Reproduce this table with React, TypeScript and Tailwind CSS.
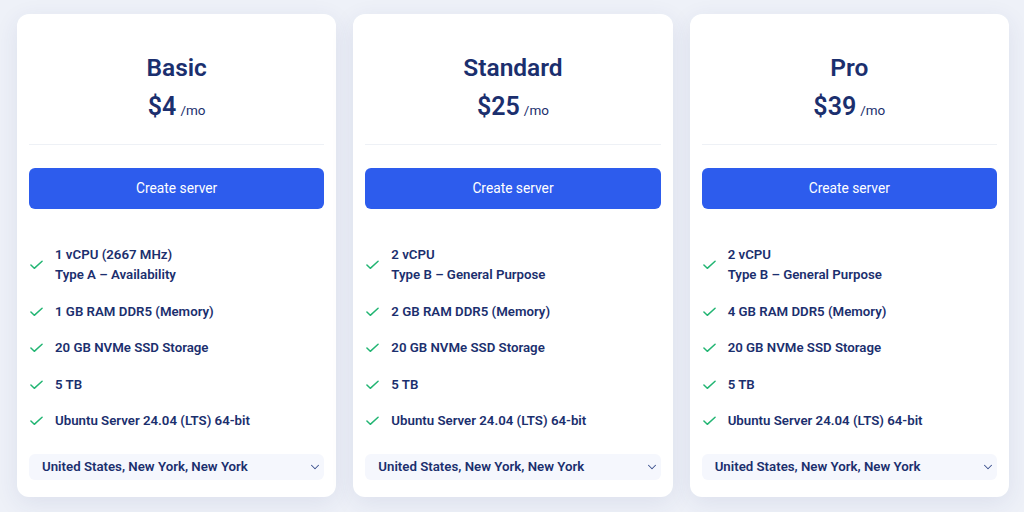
import { ChevronDown } from "lucide-react";

type Plan = {
  name: string;
  price: string;
  features: string[][];
};

const plans: Plan[] = [
  {
    name: "Basic",
    price: "$4",
    features: [
      ["1 vCPU (2667 MHz)", "Type A – Availability"],
      ["1 GB RAM DDR5 (Memory)"],
      ["20 GB NVMe SSD Storage"],
      ["5 TB"],
      ["Ubuntu Server 24.04 (LTS) 64-bit"],
    ],
  },
  {
    name: "Standard",
    price: "$25",
    features: [
      ["2 vCPU", "Type B – General Purpose"],
      ["2 GB RAM DDR5 (Memory)"],
      ["20 GB NVMe SSD Storage"],
      ["5 TB"],
      ["Ubuntu Server 24.04 (LTS) 64-bit"],
    ],
  },
  {
    name: "Pro",
    price: "$39",
    features: [
      ["2 vCPU", "Type B – General Purpose"],
      ["4 GB RAM DDR5 (Memory)"],
      ["20 GB NVMe SSD Storage"],
      ["5 TB"],
      ["Ubuntu Server 24.04 (LTS) 64-bit"],
    ],
  },
];

const Check = () => (
  <svg
    viewBox="0 0 14 10"
    className="w-[13px] h-[10px] shrink-0"
    fill="none"
    stroke="#22b573"
    strokeWidth="1.6"
    strokeLinecap="round"
    strokeLinejoin="round"
  >
    <path d="M1 5l3.6 3.6L13 1" />
  </svg>
);

const PlanCard = ({ plan }: { plan: Plan }) => (
  <div className="bg-white rounded-xl shadow-[0_6px_24px_rgba(40,60,120,0.09)] pt-[38px] px-3 pb-[17px] flex flex-col">
    <h2 className="text-center text-[24.5px] leading-[32px] font-semibold text-[#1b2f6e]">
      {plan.name}
    </h2>
    <div className="mt-[7px] text-center leading-[32px] text-[#1b2f6e]">
      <span className="text-[25px] font-semibold">{plan.price}</span>
      <span className="ml-1 text-[13.5px]">/mo</span>
    </div>
    <div className="mt-[18px] h-px bg-[#eef1f6]" />
    <button className="mt-[23px] h-[41px] rounded-md bg-[#2d5ced] text-white text-[13.75px] font-normal">
      Create server
    </button>
    <ul className="mt-[36px] flex flex-col gap-[16.5px]">
      {plan.features.map((lines, i) => (
        <li key={i} className="flex items-center gap-[12px] pl-[1px]">
          <Check />
          <div className="text-[13.25px] leading-[20px] font-semibold text-[#1b2f6e]">
            {lines.map((l) => (
              <div key={l}>{l}</div>
            ))}
          </div>
        </li>
      ))}
    </ul>
    <div className="mt-[23px] h-[26px] rounded-md bg-[#f5f7fd] flex items-center justify-between pl-[13px] pr-[2px]">
      <span className="text-[13.25px] font-semibold text-[#1b2f6e]">
        United States, New York, New York
      </span>
      <ChevronDown className="w-[14px] h-[14px] text-[#3a4f8c]" strokeWidth={1.75} />
    </div>
  </div>
);

export default function App() {
  return (
    <div
      className="w-[1024px] h-[512px] overflow-hidden bg-[#eef1f8] px-[17px] pt-[14px]"
      style={{ fontFamily: "Roboto, 'Liberation Sans', sans-serif" }}
    >
      <div className="w-[992px] grid grid-cols-3 gap-[17px] items-start">
        {plans.map((p) => (
          <PlanCard key={p.name} plan={p} />
        ))}
      </div>
    </div>
  );
}
